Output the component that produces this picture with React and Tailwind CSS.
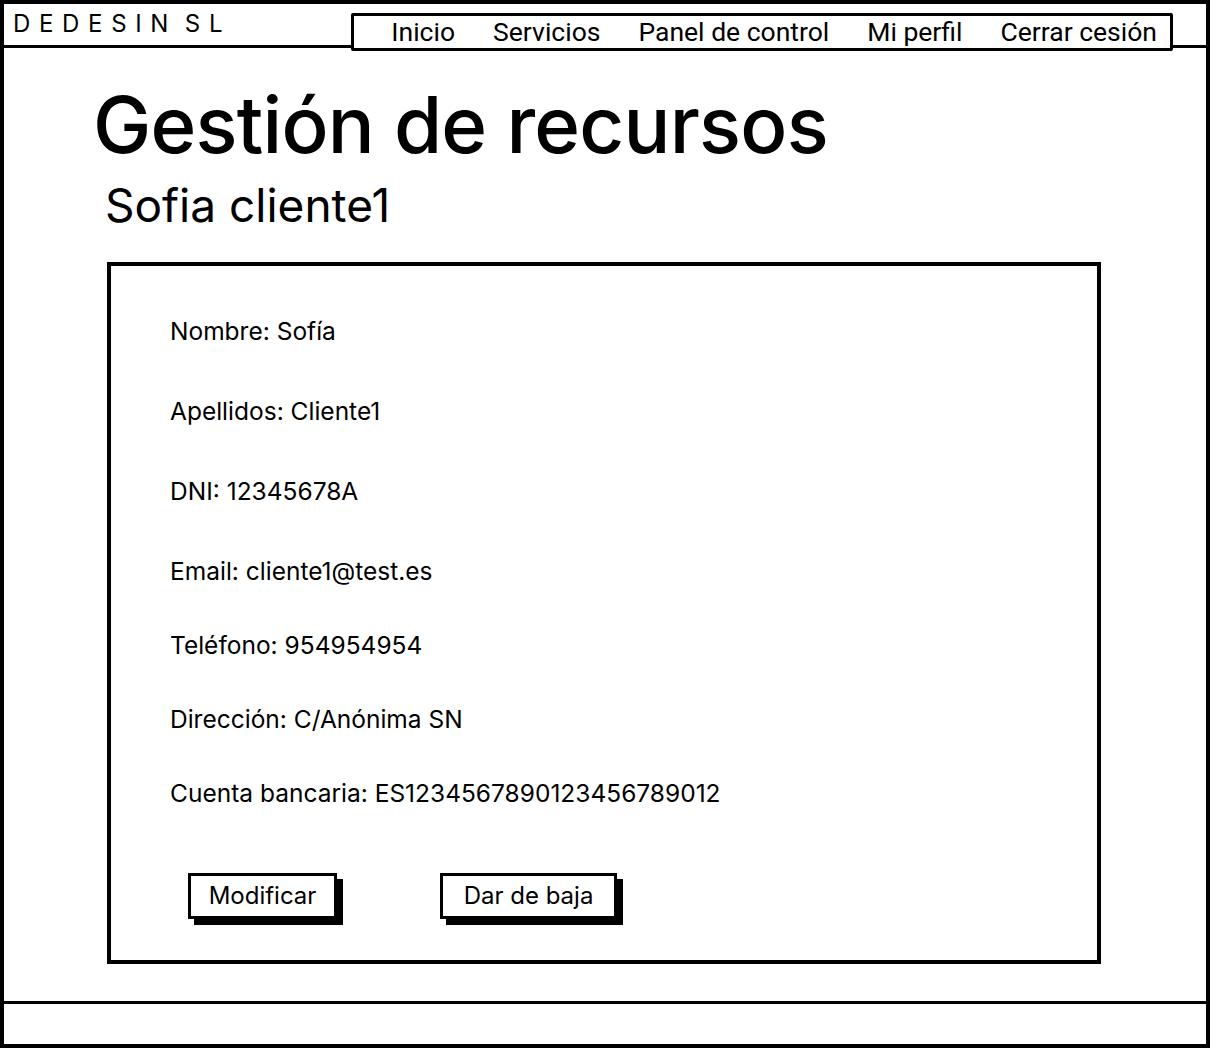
import React from 'react';

const navItems = ['Inicio', 'Servicios', 'Panel de control', 'Mi perfil', 'Cerrar cesión'];

const fields = [
  { label: 'Nombre', value: 'Sofía', mt: 'mt-0' },
  { label: 'Apellidos', value: 'Cliente1', mt: 'mt-[52px]' },
  { label: 'DNI', value: '12345678A', mt: 'mt-[52px]' },
  { label: 'Email', value: 'cliente1@test.es', mt: 'mt-[52px]' },
  { label: 'Teléfono', value: '954954954', mt: 'mt-[46px]' },
  { label: 'Dirección', value: 'C/Anónima SN', mt: 'mt-[46px]' },
  { label: 'Cuenta bancaria', value: 'ES1234567890123456789012', mt: 'mt-[46px]' },
];

const SketchButton = ({ children, width }) => (
  <button
    type="button"
    className={`h-[46px] ${width} border-[3px] border-black bg-white text-[24px] leading-none text-black shadow-[6px_6px_0_0_#000]`}
  >
    {children}
  </button>
);

const App = () => {
  return (
    <div className="flex h-[1048px] w-[1210px] flex-col overflow-hidden bg-white font-['Inter','Liberation_Sans',sans-serif] text-black">
      <div className="flex h-full flex-col border-[4px] border-black">
        {/* header */}
        <header className="flex h-[44px] shrink-0 items-start border-b-[3px] border-black">
          <div className="w-[347px] pl-[9px] pt-[8px] text-[24px] leading-none tracking-[0.04em]">
            D E D E S I N&nbsp; S L
          </div>
          <nav className="mt-[9px] -mb-[3px] flex h-[38px] w-[822px] items-center justify-end gap-[38px] rounded-[2px] border-[3px] border-black bg-white pr-[13px] font-['Roboto',sans-serif] text-[26.5px] leading-none">
            {navItems.map((item) => (
              <span key={item}>{item}</span>
            ))}
          </nav>
        </header>

        {/* main */}
        <main className="flex-1">
          <h1 className="ml-[89px] mt-[38px] text-[78px] font-medium leading-none tracking-[-0.01em]">Gestión de recursos</h1>
          <h2 className="ml-[101px] mt-[18px] text-[46px] leading-none">Sofia cliente1</h2>

          <section className="ml-[103px] mt-[34px] h-[702px] w-[994px] border-[4px] border-black px-[59px] pt-[51px]">
            <div className="flex flex-col text-[24.5px] leading-[28px]">
              {fields.map((f) => (
                <p key={f.label} className={f.mt}>
                  {f.label}: {f.value}
                </p>
              ))}
            </div>
            <div className="ml-[18px] mt-[66px] flex gap-[103px]">
              <SketchButton width="w-[149px]">Modificar</SketchButton>
              <SketchButton width="w-[177px]">Dar de baja</SketchButton>
            </div>
          </section>
        </main>

        {/* footer */}
        <footer className="h-[43px] shrink-0 border-t-[3px] border-black" />
      </div>
    </div>
  );
};

export default App;
